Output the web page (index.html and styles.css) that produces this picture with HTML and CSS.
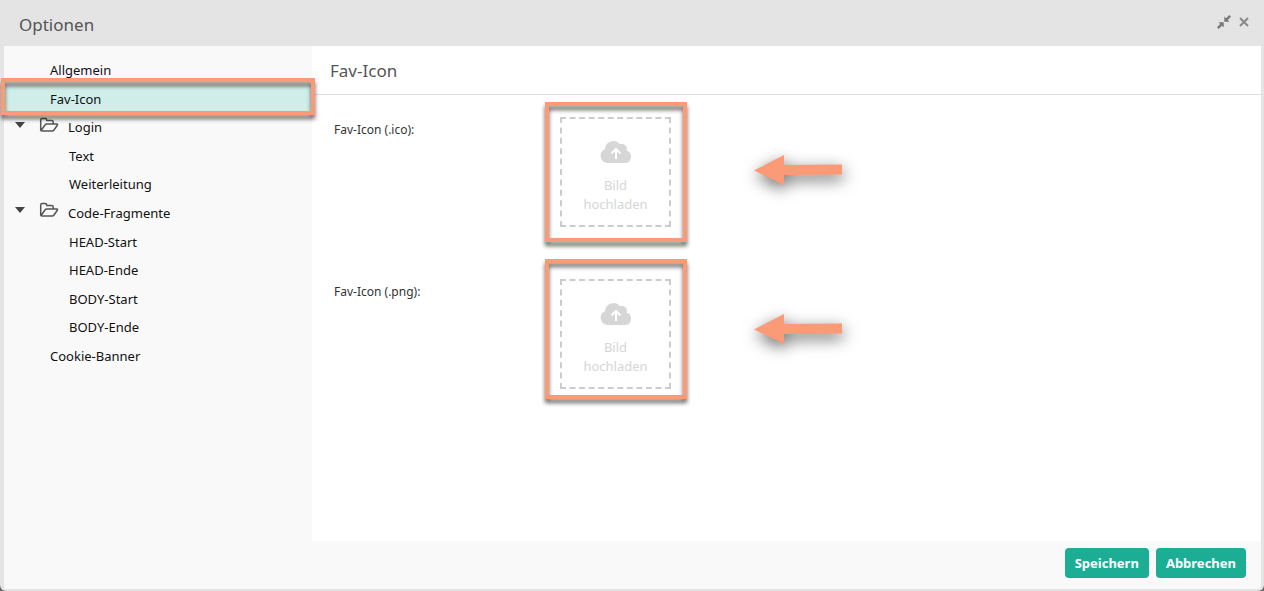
FILE: index.html
```
<!DOCTYPE html>
<html lang="de">
    <head>
        <meta charset="UTF-8">
        <title>Optionen</title>
        <link rel="stylesheet" href="styles.css">
    </head>
    <body>
        <!-- shared icons -->
        <svg class="sprite" width="0" height="0" aria-hidden="true">
            <symbol id="folder" viewBox="0 0 20 16">
                <path d="M1.700 13V3q0-1.500 1.500-1.500h3q1.500 0 1.500 1.500v.5h5q1.500 0 1.500 1.500v2M2 13.500l4-5.500q.6-1 1.800-1h10q1.200.2.500 1.200l-3.300 4.800q-.7 1-1.800 1H3q-1.300 0-1.300-1z" fill="none" stroke="#555" stroke-width="1.500" stroke-linejoin="round"/>
            </symbol>
            <symbol id="cloud" viewBox="0 0 32 24">
                <path fill="#d6d6d6" d="M7.500 23A7.200 7.200 0 0 1 5 9.200 8.500 8.500 0 0 1 20 4.200a5 5 0 0 1 6.500 6.500A6.300 6.300 0 0 1 25.500 23z"/>
                <path fill="none" stroke="#fff" stroke-width="2" d="M16 19V9M11.500 13.500L16 9l4.500 4.500"/>
            </symbol>
            <symbol id="arrow" viewBox="0 0 88 30">
                <path fill="#fa9a76" d="M0 15.500L30 0v10l58-.5v10L30 20v10z"/>
            </symbol>
        </svg>

        <div class="dialog">
            <header class="titlebar">
                <h1>Optionen</h1>
                <div class="tools">
                    <button type="button" aria-label="Verkleinern">
                        <svg width="14" height="14" viewBox="0 0 14 14"><path fill="#777" d="M7.300 1.500v5.200h5.200l-1.700-1.800L14 1.700 12.300 0 9.100 3.200zM6.700 12.500V7.300H1.500l1.700 1.800L0 12.300 1.700 14l3.200-3.200z"/></svg>
                    </button>
                    <button type="button" aria-label="Schließen">
                        <svg width="10" height="10" viewBox="0 0 10 10"><path stroke="#888" stroke-width="2" d="M1 1l8 8M9 1L1 9"/></svg>
                    </button>
                </div>
            </header>

            <div class="main">
                <nav class="sidebar">
                    <ul class="tree">
                        <li><a href="#">Allgemein</a></li>
                        <li class="active"><a href="#">Fav-Icon</a><span class="mark mark-row"></span></li>
                        <li class="group">
                            <a class="folder" href="#"><span class="caret"></span><svg width="20" height="16"><use href="#folder"/></svg>Login</a>
                            <ul>
                                <li><a href="#">Text</a></li>
                                <li><a href="#">Weiterleitung</a></li>
                            </ul>
                        </li>
                        <li class="group">
                            <a class="folder" href="#"><span class="caret"></span><svg width="20" height="16"><use href="#folder"/></svg>Code-Fragmente</a>
                            <ul>
                                <li><a href="#">HEAD-Start</a></li>
                                <li><a href="#">HEAD-Ende</a></li>
                                <li><a href="#">BODY-Start</a></li>
                                <li><a href="#">BODY-Ende</a></li>
                            </ul>
                        </li>
                        <li><a href="#">Cookie-Banner</a></li>
                    </ul>
                </nav>

                <section class="content">
                    <h2>Fav-Icon</h2>
                    <div class="field">
                        <span class="label" id="ico">Fav-Icon (.ico):</span>
                        <div class="drop">
                            <button type="button" class="upload" aria-describedby="ico">
                                <svg width="32" height="24"><use href="#cloud"/></svg>
                                <span>Bild hochladen</span>
                            </button>
                            <span class="mark mark-ico"></span>
                        </div>
                        <svg class="arrow arrow-ico" width="88" height="30"><use href="#arrow"/></svg>
                    </div>
                    <div class="field">
                        <span class="label" id="png">Fav-Icon (.png):</span>
                        <div class="drop">
                            <button type="button" class="upload" aria-describedby="png">
                                <svg width="32" height="24"><use href="#cloud"/></svg>
                                <span>Bild hochladen</span>
                            </button>
                            <span class="mark mark-png"></span>
                        </div>
                        <svg class="arrow arrow-png" width="88" height="30"><use href="#arrow"/></svg>
                    </div>
                </section>
            </div>

            <footer class="actions">
                <button type="button">Speichern</button>
                <button type="button">Abbrechen</button>
            </footer>
        </div>
    </body>
</html>
```
FILE: styles.css
```
* {box-sizing: border-box;}
body {
    background: #6b6365;
    font-family: "Noto Sans", "Open Sans", sans-serif;
    font-size: 13px;
    margin: 0;
}
h1, h2, ul {margin: 0; padding: 0;}
h1, h2 {
    color: #555;
    font-size: 17px;
    font-weight: 400;
    line-height: 24px;
}
ul {list-style: none;}
a {color: #111; text-decoration: none;}
button {
    background: none;
    border: 0;
    font-family: inherit;
    padding: 0;
}
.sprite {position: absolute;}

/* window */
.dialog {
    background: #f9f9f9;
    border: solid #e4e4e4;
    border-width: 0 3px 2px 4px;
    border-radius: 0 0 6px 6px;
    display: flex;
    flex-direction: column;
    min-height: 100vh;
}
.titlebar {
    align-items: flex-start;
    background: #e4e4e4;
    display: flex;
    height: 46px;
    justify-content: space-between;
    padding: 13px 12px 0 15px;
}
.tools {
    align-items: center;
    display: flex;
    gap: 8px;
    height: 17px;
}
.tools button {display: flex;}
.main {
    display: flex;
    flex: 1;
}

/* tree */
.sidebar {
    flex: 0 0 308px;
    padding-top: 10px;
}
.tree {
    display: grid;
    grid-auto-rows: 1fr;
    height: 314px;
}
.group, .group ul {display: contents;}
.tree a {
    align-items: center;
    display: flex;
    height: 100%;
    padding-left: 46px;
}
.group li a {padding-left: 65px;}
.tree .folder {padding-left: 11px;}
.folder svg {margin: 0 9px 5px 13px;}
.caret {
    border: 6px solid transparent;
    border-width: 6px 5px 0;
    border-top-color: #444;
    margin: 0 1px 5px 0;
}
.active {
    background: #d0eee9;
    position: relative;
}

/* highlights */
.mark {
    border: 4px solid #fa9a76;
    filter: drop-shadow(0 4px 2px rgba(0, 0, 0, .6));
    pointer-events: none;
    position: absolute;
}
.mark-row {inset: -7px -3px -2px;}
.mark-ico {inset: -15px -16px -15px -15px;}
.mark-png {inset: -20px -16px -10px -15px;}
.arrow {
    filter: drop-shadow(1px 5px 8px rgba(0, 0, 0, .6));
    margin-left: 83px;
    overflow: visible;
}
.arrow-ico {margin-top: 38px;}
.arrow-png {margin-top: 35px;}

/* form */
.content {
    background: #fff;
    flex: 1;
}
.content h2 {
    border-bottom: 1px solid #ddd;
    margin-bottom: 22px;
    padding: 13px 18px 11px;
}
.field {
    align-items: flex-start;
    display: flex;
    margin-bottom: 52px;
    padding-left: 22px;
}
.label {
    color: #333;
    flex: 0 0 226px;
    font-size: 12px;
    line-height: 26px;
}
.drop {position: relative;}
.upload {
    align-items: center;
    border: 2px dashed #ccc;
    color: #d6d6d6;
    display: flex;
    flex-direction: column;
    font-size: 13px;
    gap: 12px;
    height: 110px;
    line-height: 19px;
    padding: 21px 16px 0;
    width: 111px;
}

/* buttons */
.actions {
    display: flex;
    gap: 7px;
    height: 48px;
    justify-content: flex-end;
    padding: 7px 15px 0;
}
.actions button {
    background: #1bae95;
    border-radius: 4px;
    color: #fff;
    font-size: 13px;
    font-weight: 700;
    height: 30px;
    padding: 0 10px;
}
```
